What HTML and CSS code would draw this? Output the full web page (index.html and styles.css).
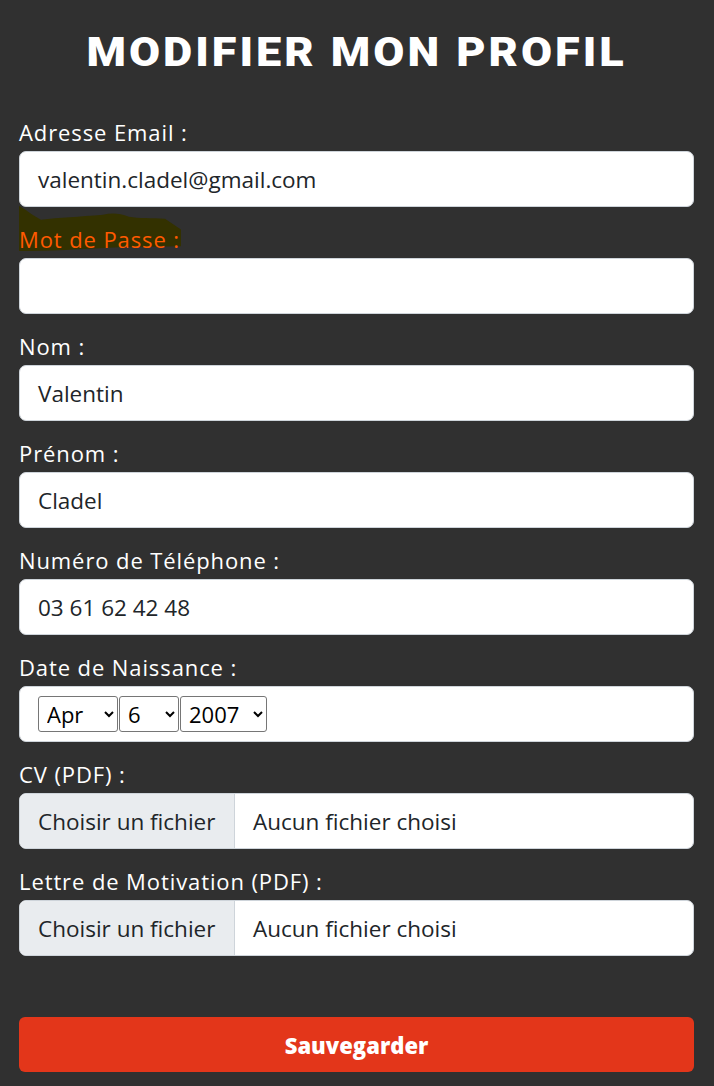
FILE: index.html
```html
<!DOCTYPE html>
<html lang="fr">
<head>
<meta charset="utf-8">
<title>Modifier mon profil</title>
<link rel="stylesheet" href="styles.css">
</head>
<body>
<main class="page">
  <h1 class="title"><span class="title-text">MODIFIER MON PROFIL</span></h1>
  <form class="form">
    <div class="group">
      <label class="label">Adresse Email :</label>
      <div class="field">valentin.cladel@gmail.com</div>
    </div>
    <div class="group">
      <label class="label label-alert">
        <svg class="smear" viewBox="0 0 164 48" preserveAspectRatio="none" aria-hidden="true">
          <path d="M0 0 C6 3 14 10 22 14 C40 12 60 11 84 9 C92 7 100 7 110 11 C120 13 132 12 146 13 L162 24 L162 41 L100 42 C60 44 30 46 0 46 Z" fill="#333100"/>
        </svg>
        <span class="label-text">Mot de Passe :</span>
      </label>
      <div class="field"></div>
    </div>
    <div class="group">
      <label class="label">Nom :</label>
      <div class="field">Valentin</div>
    </div>
    <div class="group">
      <label class="label">Prénom :</label>
      <div class="field">Cladel</div>
    </div>
    <div class="group">
      <label class="label">Numéro de Téléphone :</label>
      <div class="field">03 61 62 42 48</div>
    </div>
    <div class="group">
      <label class="label">Date de Naissance :</label>
      <div class="field field-date">
        <select class="sel sel-month"><option>Apr</option></select>
        <select class="sel sel-day"><option>6</option></select>
        <select class="sel sel-year"><option>2007</option></select>
      </div>
    </div>
    <div class="group">
      <label class="label">CV (PDF) :</label>
      <div class="field field-file">
        <span class="file-btn">Choisir un fichier</span>
        <span class="file-name">Aucun fichier choisi</span>
      </div>
    </div>
    <div class="group">
      <label class="label">Lettre de Motivation (PDF) :</label>
      <div class="field field-file">
        <span class="file-btn">Choisir un fichier</span>
        <span class="file-name">Aucun fichier choisi</span>
      </div>
    </div>
    <button type="button" class="save">Sauvegarder</button>
  </form>
</main>
</body>
</html>
```

FILE: styles.css
```css
* { box-sizing: border-box; }
html, body {
  margin: 0;
  padding: 0;
  background: #303030;
}
.page {
  padding: 28px 20px 14px 19px;
}
.title {
  margin: 0 0 44px;
  text-align: center;
  color: #ffffff;
  font-family: Roboto, "Liberation Sans", sans-serif;
  font-weight: 900;
  font-size: 41px;
  line-height: 48px;
  letter-spacing: 2.7px;
}
.title-text {
  display: inline-block;
  transform: scaleX(1.1);
}
.form {
  display: flex;
  flex-direction: column;
}
.group {
  display: flex;
  flex-direction: column;
  gap: 7px;
  margin-bottom: 20px;
}
.label {
  position: relative;
  display: block;
  color: #ffffff;
  font-family: "Open Sans", "Noto Sans", sans-serif;
  font-weight: 500;
  font-size: 22px;
  line-height: 24px;
  letter-spacing: 0.9px;
}
.label-alert { color: #ff5a00; }
.label-text { position: relative; }
.smear {
  position: absolute;
  left: 0;
  top: -21px;
  width: 164px;
  height: 47px;
}
.field {
  height: 56px;
  background: #ffffff;
  border: 1px solid #ced4da;
  border-radius: 7px;
  padding: 13px 18px 11px;
  color: #212529;
  font-family: "Open Sans", "Noto Sans", sans-serif;
  font-size: 22.5px;
  line-height: 30px;
  overflow: hidden;
  white-space: nowrap;
}
.field-date {
  display: flex;
  align-items: center;
  gap: 1px;
  padding: 0 18px;
}
.sel {
  height: 36px;
  font-family: "Open Sans", "Noto Sans", sans-serif;
  font-size: 22px;
  color: #000;
  background: #fff;
  border: 1px solid #767676;
  border-radius: 3px;
  padding: 0 2px 0 4px;
}
.sel-month { width: 80px; }
.sel-day { width: 60px; }
.sel-year { width: 87px; }
.field-file {
  display: flex;
  padding: 0;
}
.file-btn {
  width: 215px;
  flex: none;
  background: #e9ecef;
  border-right: 1px solid #ced4da;
  padding: 13px 18px 11px;
}
.file-name {
  padding: 13px 18px 11px;
}
.save {
  margin-top: 41px;
  height: 55px;
  width: 100%;
  background: #e3361a;
  border: none;
  border-radius: 6px;
  color: #ffffff;
  font-family: "Open Sans", "Noto Sans", sans-serif;
  font-weight: 800;
  font-size: 22px;
  letter-spacing: 0;
}
```
